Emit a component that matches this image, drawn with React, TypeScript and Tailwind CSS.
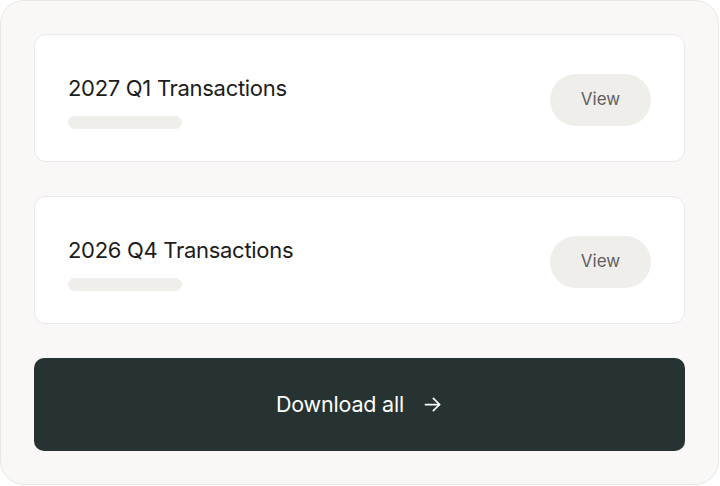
import React from 'react'

const rows = [{ title: '2027 Q1 Transactions' }, { title: '2026 Q4 Transactions' }]

const TransactionCard = ({ title }: { title: string }) => {
  return (
    <div className="flex h-[128px] items-center justify-between rounded-[12px] border border-[#ebe8ec] bg-white pl-[33px] pr-[33px]">
      <div className="flex flex-col pt-[7px]">
        <h3 className="text-[22px] leading-[28px] tracking-[-0.3px] text-[#1c1c1c]">{title}</h3>
        <div className="mt-[14px] h-[13px] w-[114px] rounded-full bg-[#efeeeb]" />
      </div>
      <button className="mt-[3px] flex h-[52px] w-[101px] items-center justify-center rounded-full bg-[#efeeeb] text-[17px] text-[#5f5f5f]">
        View
      </button>
    </div>
  )
}

export default function App() {
  return (
    <div className="h-[486px] w-[720px] bg-white font-['Inter',sans-serif]">
      <div className="flex h-[485px] w-[719px] flex-col gap-[34px] rounded-[24px] border border-[#e9e7e4] bg-[#f9f8f6] px-[33px] pb-[32px] pt-[33px]">
        {rows.map((row) => (
          <TransactionCard key={row.title} title={row.title} />
        ))}
        <button className="flex h-[93px] items-center justify-center gap-[18px] rounded-[10px] bg-[#263332] text-[21.5px] tracking-[-0.2px] text-white">
          <span>Download all</span>
          <svg width="21" height="21" viewBox="0 0 24 24" fill="none" stroke="currentColor" strokeWidth="2" strokeLinecap="round" strokeLinejoin="round">
            <path d="M4 12h16" />
            <path d="M13 5l7 7-7 7" />
          </svg>
        </button>
      </div>
    </div>
  )
}
